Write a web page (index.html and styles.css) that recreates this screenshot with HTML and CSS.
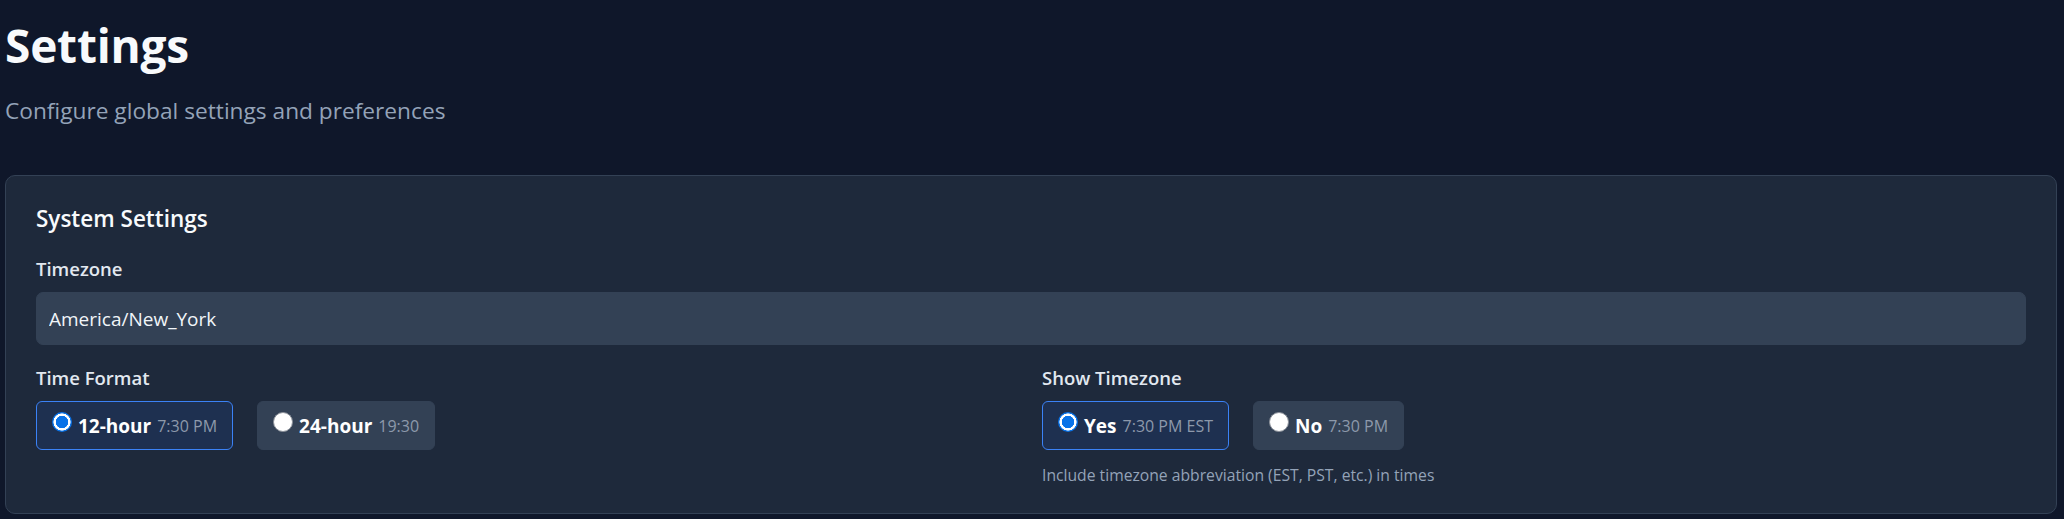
FILE: index.html
```html
<!DOCTYPE html>
<html lang="en">
<head>
<meta charset="utf-8">
<title>Settings</title>
<link rel="stylesheet" href="styles.css">
</head>
<body>
<main class="page">
  <header class="page-header">
    <h1 class="page-title">Settings</h1>
    <p class="page-subtitle">Configure global settings and preferences</p>
  </header>

  <section class="card">
    <h2 class="card-title">System Settings</h2>

    <div class="field">
      <label class="field-label" for="tz">Timezone</label>
      <input class="text-input" id="tz" type="text" value="America/New_York">
    </div>

    <div class="field-grid">
      <div class="field">
        <span class="field-label">Time Format</span>
        <div class="options">
          <label class="option option-selected">
            <input class="radio" type="radio" name="fmt" checked>
            <span class="option-name">12-hour</span>
            <span class="option-hint">7:30 PM</span>
          </label>
          <label class="option">
            <input class="radio" type="radio" name="fmt">
            <span class="option-name">24-hour</span>
            <span class="option-hint">19:30</span>
          </label>
        </div>
      </div>

      <div class="field">
        <span class="field-label">Show Timezone</span>
        <div class="options">
          <label class="option option-selected">
            <input class="radio" type="radio" name="showtz" checked>
            <span class="option-name">Yes</span>
            <span class="option-hint">7:30 PM EST</span>
          </label>
          <label class="option">
            <input class="radio" type="radio" name="showtz">
            <span class="option-name">No</span>
            <span class="option-hint">7:30 PM</span>
          </label>
        </div>
        <p class="help">Include timezone abbreviation (EST, PST, etc.) in times</p>
      </div>
    </div>
  </section>
</main>
</body>
</html>
```

FILE: styles.css
```css
* { box-sizing: border-box; }

html, body {
  margin: 0;
  background: #0f172a;
}

body {
  font-family: "Open Sans", "Noto Sans", "DejaVu Sans", sans-serif;
  color: #f1f5f9;
}

.page {
  padding: 17px 7px 0 5px;
}

.page-title {
  margin: 0;
  font-size: 46px;
  line-height: 56px;
  font-weight: 700;
  color: #f8fafc;
  letter-spacing: -0.2px;
}

.page-subtitle {
  margin: 22px 0 0;
  font-size: 22.7px;
  line-height: 31px;
  color: #94a3b8;
}

.card {
  margin-top: 49px;
  background: #1e293b;
  border: 1px solid #334155;
  border-radius: 10px;
  padding: 28px 30px 27px 30px;
}

.card-title {
  margin: 0;
  font-size: 22.5px;
  line-height: 30px;
  font-weight: 600;
  color: #f8fafc;
}

.field {
  display: flex;
  flex-direction: column;
}

.card-title + .field {
  margin-top: 22px;
}

.field-label {
  font-size: 18.5px;
  line-height: 26px;
  font-weight: 600;
  color: #e2e8f0;
  margin-bottom: 10px;
}

.text-input {
  height: 53px;
  width: 100%;
  background: #334155;
  border: 1px solid #334155;
  border-radius: 7px;
  padding: 0 12px;
  font-family: inherit;
  font-size: 19px;
  color: #f1f5f9;
  outline: none;
}

.field-grid {
  margin-top: 20px;
  display: grid;
  grid-template-columns: 1fr 1fr;
  column-gap: 22px;
}

.options {
  display: flex;
  gap: 24px;
}

.option {
  display: flex;
  align-items: center;
  height: 49px;
  padding: 0 15px;
  border: 1px solid #334155;
  background: #334155;
  border-radius: 6px;
}

.option-selected {
  background: #1e3050;
  border-color: #3b82f6;
}

.radio {
  appearance: none;
  -webkit-appearance: none;
  width: 20px;
  height: 20px;
  margin: 0 6px 8px 0;
  border-radius: 50%;
  background: #ffffff;
  border: 1px solid #8a8f98;
  flex: none;
}

.radio:checked {
  border: none;
  background: radial-gradient(circle, #0a73e8 0 6px, #ffffff 6.5px 8.3px, #0a73e8 8.8px);
}

.option-name {
  font-size: 19px;
  font-weight: 700;
  color: #ffffff;
}

.option-hint {
  margin-left: 6px;
  font-size: 16px;
  color: #8d99ab;
}

.help {
  margin: 15px 0 0;
  font-size: 15.7px;
  line-height: 21px;
  color: #94a3b8;
}
```
